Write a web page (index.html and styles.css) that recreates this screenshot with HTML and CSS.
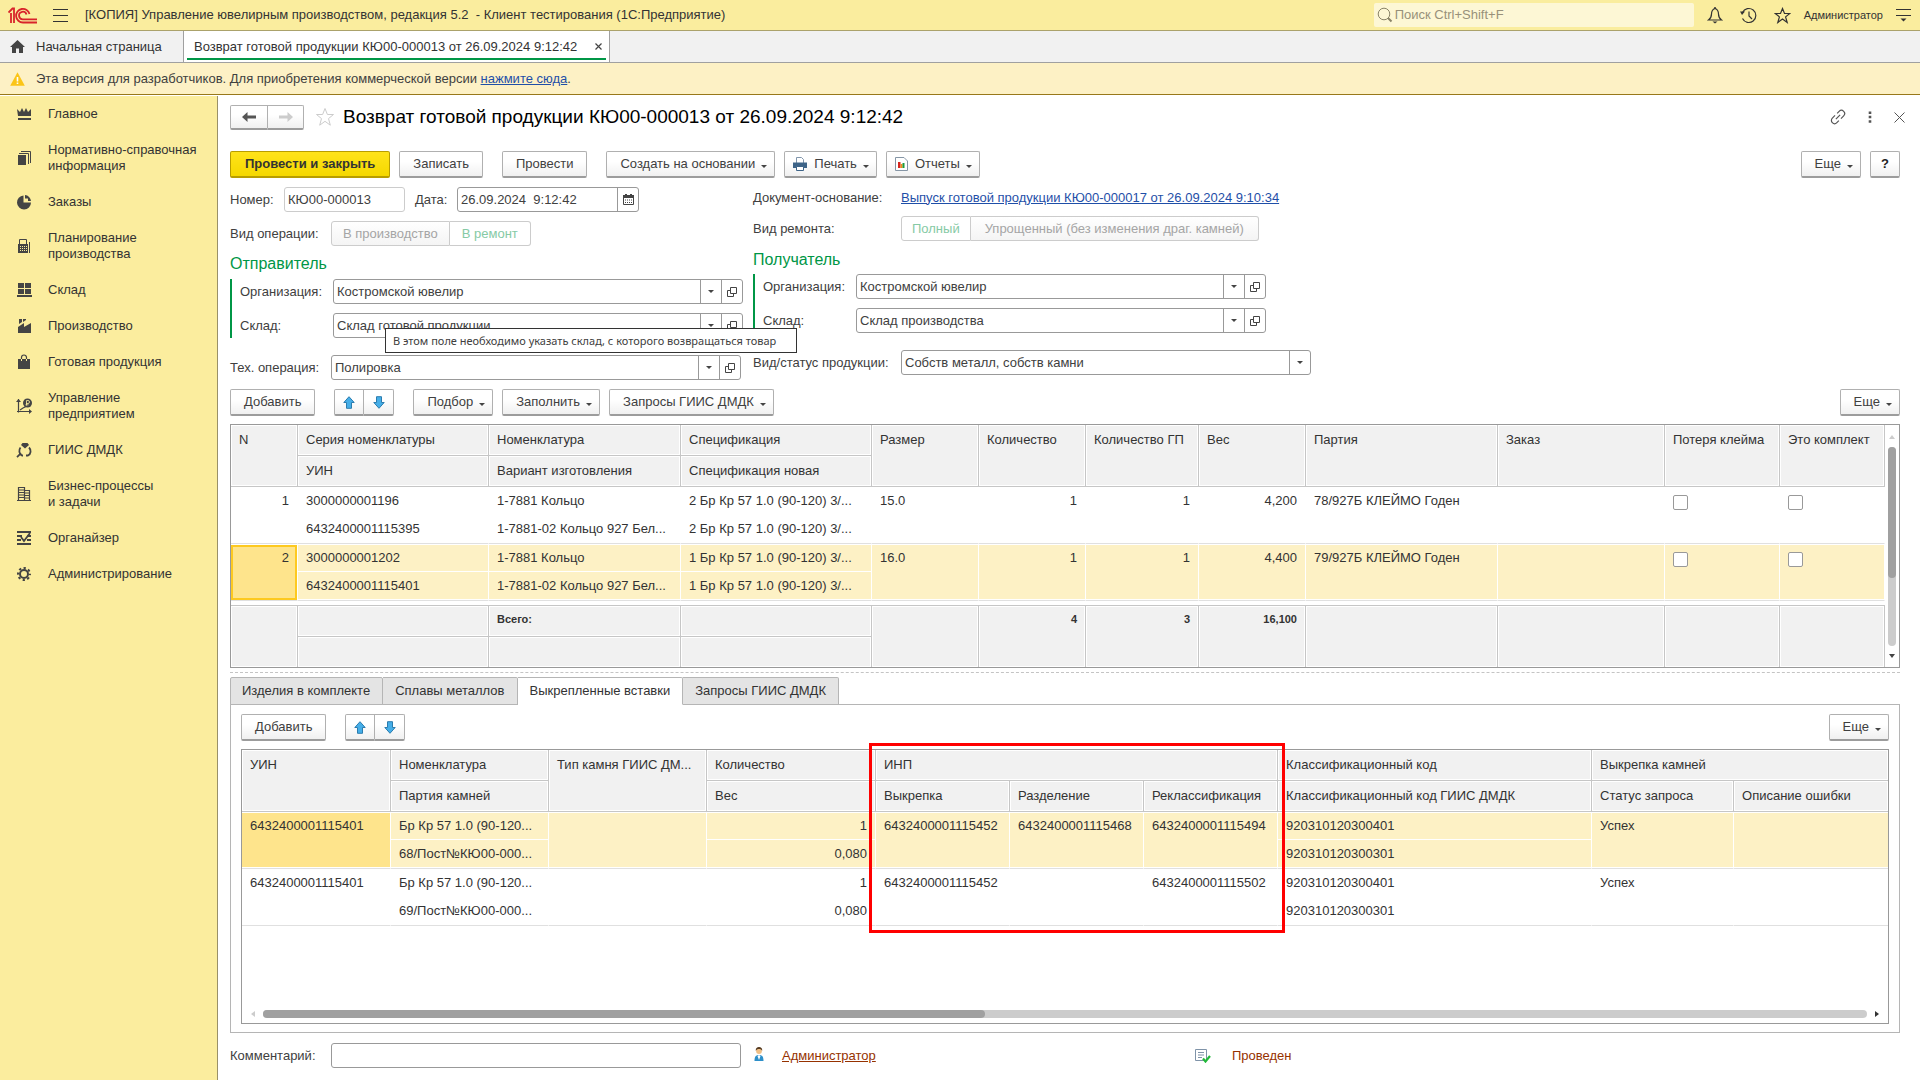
FILE: index.html
```html
<!DOCTYPE html>
<html lang="ru">
<head>
<meta charset="utf-8">
<title>Возврат готовой продукции КЮ00-000013</title>
<link rel="stylesheet" href="styles.css">
</head>
<body>
<svg class="defs" aria-hidden="true">
  <symbol id="i-open" viewBox="0 0 10 10"><path d="M3.500.5h6v6h-6zM3 3.500H.5v6h6V7" fill="none" stroke="#444"/></symbol>
  <symbol id="i-up" viewBox="0 0 12 13"><path d="M6 .7 11.200 6.500H8.500V12.300h-5V6.500H.8z" fill="#45aee8" stroke="#2b7cae" stroke-linejoin="round"/></symbol>
  <symbol id="i-down" viewBox="0 0 12 13"><path d="M6 12.300 11.200 6.500H8.500V.7h-5v5.800H.8z" fill="#45aee8" stroke="#2b7cae" stroke-linejoin="round"/></symbol>
</svg>

<header class="topbar">
  <svg class="logo" viewBox="0 0 30 17" width="30" height="17"><g fill="none" stroke="#d8232a" stroke-width="1.800"><path d="M.5 5.500 4.500 1.500H6V16"/><path d="M3 16V6"/><path d="M21.500 7A6.800 6.800 0 1 0 15 15.500H29"/><path d="M18.500 7.500A3.800 3.800 0 1 0 15 12.300H29"/></g></svg>
  <button class="icon-btn burger" aria-label="Меню"><svg width="15" height="13" viewBox="0 0 15 13"><path d="M0 .5h15M0 6.500h15M0 12.500h15" stroke="#333"/></svg></button>
  <span class="app-title">[КОПИЯ] Управление ювелирным производством, редакция 5.2 &nbsp;- Клиент тестирования (1С:Предприятие)</span>
  <label class="search"><svg width="16" height="16" viewBox="0 0 16 16"><circle cx="7" cy="7" r="5.800" fill="none" stroke="#8a8468"/><path d="m11 11 3.500 3.500" stroke="#8a8468" stroke-width="2"/></svg><input type="text" placeholder="Поиск Ctrl+Shift+F" aria-label="Поиск"></label>
  <button class="icon-btn" aria-label="Уведомления"><svg width="16" height="18" viewBox="0 0 16 18"><path d="M8 2.500C5 3.500 4.500 5.500 4.500 8c0 3-1 4.500-3 6h13c-2-1.500-3-3-3-6 0-2.500-.5-4.500-3.500-5.500z" fill="none" stroke="#333" stroke-width="1.200"/><path d="M8 1v2" stroke="#333" stroke-width="1.500"/><path d="M5.500 15.500h5L8 17.500z" fill="#333"/></svg></button>
  <button class="icon-btn" aria-label="История"><svg width="17" height="17" viewBox="0 0 17 17"><path d="M2.500 5.500a7 7 0 1 1 0 6M9 4.500V9l3 3" fill="none" stroke="#333" stroke-width="1.200"/><path d="M0 4.500h5L2 8z" fill="#333"/></svg></button>
  <button class="icon-btn" aria-label="Избранное"><svg width="17" height="17" viewBox="0 0 17 17"><path d="m8.500 1.500 2 5h5.300l-4.200 3.400 1.600 5.600-4.700-3.400-4.700 3.400 1.600-5.600L1.200 6.500h5.300z" fill="none" stroke="#333" stroke-width="1.200"/></svg></button>
  <span class="user">Администратор</span>
  <button class="icon-btn" aria-label="Настройки"><svg width="15" height="14" viewBox="0 0 15 14"><path d="M0 1.500h15M0 7.500h15" stroke="#333" stroke-width="1.200"/><path d="M4.500 10.500h6l-3 3z" fill="#333"/></svg></button>
</header>

<nav class="tabs">
  <a class="tab home" href="#"><svg width="15" height="13" viewBox="0 0 15 13"><path d="M7.500 0 15 7h-2v6H9V8.500H6V13H2V7H0z" fill="#444"/></svg>Начальная страница</a>
  <a class="tab active" href="#"><span>Возврат готовой продукции КЮ00-000013 от 26.09.2024 9:12:42</span><svg width="7" height="7" viewBox="0 0 7 7"><path d="m.5.5 6 6m0-6-6 6" stroke="#444" stroke-width="1.200"/></svg></a>
</nav>

<div class="notice">
  <svg width="15" height="14" viewBox="0 0 15 14"><path d="M7.500.3 14.800 13.700H.2z" fill="#fbc518"/><path d="M7.500 5v4.500M7.500 10.500v1.500" stroke="#fff" stroke-width="1.600"/></svg>
  <span>Эта версия для разработчиков. Для приобретения коммерческой версии <a href="#">нажмите сюда</a>.</span>
</div>

<div class="body">
  <aside class="sidebar">
    <a href="#"><svg width="16" height="16" viewBox="0 0 16 16"><path d="M1 3l3 3 2-4 2 4 2-4 2 4 3-3v7H2zM2 12h13v2H2z"/></svg>Главное</a>
    <a href="#"><svg width="16" height="16" viewBox="0 0 16 16"><path d="M2 5h8v10H2z"/><path d="M3 3.500h9.500V14M5 1.500h9.500V13" fill="none" stroke="#444"/></svg><span>Нормативно-справочная<br>информация</span></a>
    <a href="#"><svg width="16" height="16" viewBox="0 0 16 16"><path d="M7.500 1.500V8.500H15A7 7 0 1 1 7.500 1.500z"/><path d="M9 1a6.500 6.500 0 0 1 6 6H12V4.500H9z"/></svg>Заказы</a>
    <a href="#"><svg width="16" height="16" viewBox="0 0 16 16"><path d="M2 6h10v9H2z"/><path d="M3.500 6V1.500h7V6M13.500 4V15" fill="none" stroke="#444"/><path d="M4 8.500h7M4 10.500h7M4 12.500h7" stroke="#fbed9e" stroke-dasharray="1 1"/></svg><span>Планирование<br>производства</span></a>
    <a href="#"><svg width="16" height="16" viewBox="0 0 16 16"><path d="M2 1h6v5H2zM9 1h6v5H9zM2 7h6v5H2zM9 7h6v5H9zM1 13h15v2H1z"/></svg>Склад</a>
    <a href="#"><svg width="16" height="16" viewBox="0 0 16 16"><path d="M2 9l6-4v4l7-4v10H2zM3 1h3v3L3 6zM7 1h3v1L7 4z"/></svg>Производство</a>
    <a href="#"><svg width="16" height="16" viewBox="0 0 16 16"><path d="M2 5h12v10H2z"/><path d="M5.500 7V3.500a2.500 2.500 0 0 1 5 0V7" fill="none" stroke="#444" stroke-width="1.200"/><path d="M5.500 5v2M10.500 5v2" stroke="#fbed9e"/></svg>Готовая продукция</a>
    <a href="#"><svg width="16" height="16" viewBox="0 0 16 16"><path d="M2.500 1v13.500M1 13.500h13M4 12l3-2 2-1 2-1" fill="none" stroke="#444" stroke-width="1.200"/><path d="M0 4h5L2.500 1zM13 11v5l3-2.500z"/><circle cx="11.500" cy="5" r="4.500"/><path d="M10.500 7.500v-5h1.500a1.500 1.500 0 0 1 0 3h-2M9.500 6.800h3" fill="none" stroke="#fbed9e" stroke-width=".8"/></svg><span>Управление<br>предприятием</span></a>
    <a href="#"><svg width="16" height="16" viewBox="0 0 16 16"><path d="M5 3l1.500-2h5L13 3 9 6.500zM1 15l3.500-4"/><path d="M4.500 5.500C2.500 8 3 12 6 13.500h1M13 5.500c2.500 2.500 2 6.500-1 8h-2M1 15.200l4-4" fill="none" stroke="#444" stroke-width="1.800"/></svg>ГИИС ДМДК</a>
    <a href="#"><svg width="16" height="16" viewBox="0 0 16 16"><path d="M2.500 14.500v-13h6v13M8.500 4.500h5v10M1 14.500h14M2 4h6M2 6.500h6M2 9h6M2 11.500h6M9 7h5M9 9.500h5M9 12h5" fill="none" stroke="#444" stroke-width="1.200"/></svg><span>Бизнес-процессы<br>и задачи</span></a>
    <a href="#"><svg width="16" height="16" viewBox="0 0 16 16"><path d="M1 2h14M1 6h5M11 6h4M1 10h4M11 10h4M1 14h14" stroke="#444" stroke-width="1.800"/><path d="M5 7l3 4 6-8" stroke="#444" stroke-width="1.800" fill="none"/></svg>Органайзер</a>
    <a href="#"><svg width="16" height="16" viewBox="0 0 16 16"><circle cx="8" cy="8" r="4" fill="none" stroke="#444" stroke-width="2"/><circle cx="8" cy="8" r="6" fill="none" stroke="#444" stroke-width="2" stroke-dasharray="2.300 2.410" stroke-dashoffset="1.150"/></svg>Администрирование</a>
  </aside>

  <main class="main">
    <div class="title-row">
      <div class="pair nav">
        <button aria-label="Назад"><svg width="14" height="10" viewBox="0 0 14 10"><path d="M0 5l5.500-5v3.500H14v3H5.500V10z" fill="#555"/></svg></button><button aria-label="Вперед" disabled><svg width="14" height="10" viewBox="0 0 14 10"><path d="M14 5L8.500 0v3.500H0v3h8.500V10z" fill="#ccc"/></svg></button>
      </div>
      <svg class="star" width="20" height="20" viewBox="0 0 20 20"><path d="m10 1.500 2.400 6h6.100l-5 4.100 1.800 6.600L10 14.300l-5.300 3.900 1.800-6.600-5-4.100h6.100z" fill="none" stroke="#ccc"/></svg>
      <h1>Возврат готовой продукции КЮ00-000013 от 26.09.2024 9:12:42</h1>
      <div class="win-tools">
        <button class="icon-btn" aria-label="Ссылка"><svg width="16" height="16" viewBox="0 0 16 16"><g transform="rotate(-45 8 8)" fill="none" stroke="#555" stroke-width="1.200"><path d="M7 4.800H3.200a3.200 3.200 0 0 0 0 6.400H6M9 11.200h3.800a3.200 3.200 0 0 0 0-6.400H10M5 8h6"/></g></svg></button>
        <button class="icon-btn" aria-label="Действия"><svg width="4" height="12" viewBox="0 0 4 12"><path d="M.7.500h2.600v2.500H.7zM.7 4.800h2.600v2.500H.7zM.7 9.200h2.600v2.500H.7z" fill="#555"/></svg></button>
        <button class="icon-btn" aria-label="Закрыть"><svg width="11" height="11" viewBox="0 0 11 11"><path d="m.5.500 10 10m0-10-10 10" stroke="#555"/></svg></button>
      </div>
    </div>

    <div class="toolbar commands">
      <button class="btn primary">Провести и закрыть</button>
      <button class="btn">Записать</button>
      <button class="btn wide-gap">Провести</button>
      <button class="btn menu wide-gap">Создать на основании</button>
      <button class="btn menu pic"><svg width="14" height="14" viewBox="0 0 14 14"><path d="M3.500 6V.5h5l2 2V6" fill="#fff" stroke="#8095ab"/><path d="M0 5.500h14V11H0z" fill="#3e6488"/><path d="M3.500 9.500h7v4h-7z" fill="#fff" stroke="#3e6488"/></svg>Печать</button>
      <button class="btn menu pic"><svg width="13" height="14" viewBox="0 0 13 14"><path d="M.5.500h8.500l3.500 3.500v9.500H.5z" fill="#fff" stroke="#8595a5"/><path d="M3 5h2.500v6H3z" fill="#d6261f"/><path d="M5.500 7h2v4h-2z" fill="#f08a1a"/><path d="M7.500 6h2v5h-2z" fill="#1c9c3c"/></svg>Отчеты</button>
      <button class="btn menu push">Еще</button>
      <button class="btn help">?</button>
    </div>

    <div class="form">
      <section class="col left">
        <div class="row">
          <label class="number-label" for="num">Номер:</label>
          <div class="field muted number"><input id="num" value="КЮ00-000013"></div>
          <label class="date-label" for="date">Дата:</label>
          <div class="field date"><input id="date" value="26.09.2024  9:12:42"><button aria-label="Календарь"><svg width="11" height="11" viewBox="0 0 11 11"><path d="M.5 1.500h10v9H.5z" fill="none" stroke="#444"/><path d="M0 1h11v3H0zM2 0h2v2H2zM7 0h2v2H7z" fill="#444"/><path d="M2 6h7M2 8.500h7" stroke="#444" stroke-dasharray="1 1"/></svg></button></div>
        </div>
        <div class="row kind">
          <span class="label">Вид операции:</span>
          <div class="segments"><button disabled>В производство</button><button class="on" disabled>В ремонт</button></div>
        </div>
        <h2>Отправитель</h2>
        <div class="group">
          <div class="row"><label class="label" for="org1">Организация:</label>
            <div class="field combo"><input id="org1" value="Костромской ювелир"><button class="drop" aria-label="Выбрать"></button><button aria-label="Открыть"><svg width="10" height="10"><use href="#i-open"/></svg></button></div></div>
          <div class="row"><label class="label" for="wh1">Склад:</label>
            <div class="field combo"><input id="wh1" value="Склад готовой продукции"><button class="drop" aria-label="Выбрать"></button><button aria-label="Открыть"><svg width="10" height="10"><use href="#i-open"/></svg></button>
              <div class="tooltip" role="tooltip">В этом поле необходимо указать склад, с которого возвращаться товар</div></div></div>
        </div>
        <div class="row"><label class="label" for="tech">Тех. операция:</label>
          <div class="field combo"><input id="tech" value="Полировка"><button class="drop" aria-label="Выбрать"></button><button aria-label="Открыть"><svg width="10" height="10"><use href="#i-open"/></svg></button></div></div>
      </section>

      <section class="col right">
        <div class="row"><span class="label">Документ-основание:</span><a class="doc-link" href="#">Выпуск готовой продукции КЮ00-000017 от 26.09.2024 9:10:34</a></div>
        <div class="row kind"><span class="label">Вид ремонта:</span>
          <div class="segments"><button class="on" disabled>Полный</button><button disabled>Упрощенный (без изменения драг. камней)</button></div></div>
        <h2>Получатель</h2>
        <div class="group">
          <div class="row"><label class="label" for="org2">Организация:</label>
            <div class="field combo"><input id="org2" value="Костромской ювелир"><button class="drop" aria-label="Выбрать"></button><button aria-label="Открыть"><svg width="10" height="10"><use href="#i-open"/></svg></button></div></div>
          <div class="row"><label class="label" for="wh2">Склад:</label>
            <div class="field combo"><input id="wh2" value="Склад производства"><button class="drop" aria-label="Выбрать"></button><button aria-label="Открыть"><svg width="10" height="10"><use href="#i-open"/></svg></button></div></div>
        </div>
        <div class="row"><label class="label" for="stat">Вид/статус продукции:</label>
          <div class="field combo"><input id="stat" value="Собств металл, собств камни"><button class="drop" aria-label="Выбрать"></button></div></div>
      </section>
    </div>

    <div class="toolbar">
      <button class="btn">Добавить</button>
      <div class="pair wide-gap"><button aria-label="Вверх"><svg width="12" height="13"><use href="#i-up"/></svg></button><button aria-label="Вниз"><svg width="12" height="13"><use href="#i-down"/></svg></button></div>
      <button class="btn menu wide-gap">Подбор</button>
      <button class="btn menu">Заполнить</button>
      <button class="btn menu">Запросы ГИИС ДМДК</button>
      <button class="btn menu push">Еще</button>
    </div>

    <div class="grid-box items">
      <table>
        <colgroup><col class="w67"><col class="w191"><col class="w192"><col class="w191"><col class="w107"><col class="w107"><col class="w113"><col class="w107"><col class="w192"><col><col class="w115"><col class="w105"></colgroup>
        <thead>
          <tr><th rowspan="2">N</th><th>Серия номенклатуры</th><th>Номенклатура</th><th>Спецификация</th><th rowspan="2">Размер</th><th rowspan="2">Количество</th><th rowspan="2">Количество ГП</th><th rowspan="2">Вес</th><th rowspan="2">Партия</th><th rowspan="2">Заказ</th><th rowspan="2">Потеря клейма</th><th rowspan="2">Это комплект</th></tr>
          <tr><th>УИН</th><th>Вариант изготовления</th><th>Спецификация новая</th></tr>
        </thead>
        <tbody>
          <tr class="a"><td rowspan="2" class="num">1</td><td>3000000001196</td><td>1-7881 Кольцо</td><td>2 Бр Кр 57 1.0 (90-120) 3/...</td><td rowspan="2">15.0</td><td rowspan="2" class="num">1</td><td rowspan="2" class="num">1</td><td rowspan="2" class="num">4,200</td><td rowspan="2">78/927Б КЛЕЙМО Годен</td><td rowspan="2"></td><td rowspan="2"><input type="checkbox" aria-label="Потеря клейма"></td><td rowspan="2"><input type="checkbox" aria-label="Это комплект"></td></tr>
          <tr class="b"><td>6432400001115395</td><td>1-7881-02 Кольцо 927 Бел...</td><td>2 Бр Кр 57 1.0 (90-120) 3/...</td></tr>
          <tr class="a sel"><td rowspan="2" class="num current framed">2</td><td>3000000001202</td><td>1-7881 Кольцо</td><td>1 Бр Кр 57 1.0 (90-120) 3/...</td><td rowspan="2">16.0</td><td rowspan="2" class="num">1</td><td rowspan="2" class="num">1</td><td rowspan="2" class="num">4,400</td><td rowspan="2">79/927Б КЛЕЙМО Годен</td><td rowspan="2"></td><td rowspan="2"><input type="checkbox" aria-label="Потеря клейма"></td><td rowspan="2"><input type="checkbox" aria-label="Это комплект"></td></tr>
          <tr class="b sel"><td>6432400001115401</td><td>1-7881-02 Кольцо 927 Бел...</td><td>1 Бр Кр 57 1.0 (90-120) 3/...</td></tr>
        </tbody>
        <tfoot>
          <tr class="gap"><td colspan="12"></td></tr>
          <tr><td rowspan="2"></td><td></td><td>Всего:</td><td></td><td rowspan="2"></td><td rowspan="2" class="num">4</td><td rowspan="2" class="num">3</td><td rowspan="2" class="num">16,100</td><td rowspan="2"></td><td rowspan="2"></td><td rowspan="2"></td><td rowspan="2"></td></tr>
          <tr class="last"><td></td><td></td><td></td></tr>
        </tfoot>
      </table>
      <div class="vscroll"><svg width="6" height="4" viewBox="0 0 6 4"><path d="M3 0l3 4H0z" fill="#ccc"/></svg><div class="track"><div class="thumb"></div></div><svg width="6" height="4" viewBox="0 0 6 4"><path d="M0 0h6L3 4z" fill="#444"/></svg></div>
    </div>

    <div class="splitter"></div>

    <div class="page-tabs" role="tablist">
      <button role="tab">Изделия в комплекте</button><button role="tab">Сплавы металлов</button><button role="tab" class="on" aria-selected="true">Выкрепленные вставки</button><button role="tab">Запросы ГИИС ДМДК</button>
    </div>
    <section class="panel">
      <div class="toolbar">
        <button class="btn">Добавить</button>
        <div class="pair wide-gap"><button aria-label="Вверх"><svg width="12" height="13"><use href="#i-up"/></svg></button><button aria-label="Вниз"><svg width="12" height="13"><use href="#i-down"/></svg></button></div>
        <button class="btn menu push">Еще</button>
      </div>
      <div class="grid-box inserts">
        <table>
          <colgroup><col class="w149"><col class="w158"><col class="w158"><col class="w169"><col class="w134"><col class="w134"><col class="w134"><col class="w314"><col class="w142"><col></colgroup>
          <thead>
            <tr><th rowspan="2">УИН</th><th>Номенклатура</th><th rowspan="2">Тип камня ГИИС ДМ...</th><th>Количество</th><th colspan="3">ИНП</th><th>Классификационный код</th><th colspan="2">Выкрепка камней</th></tr>
            <tr><th>Партия камней</th><th>Вес</th><th>Выкрепка</th><th>Разделение</th><th>Реклассификация</th><th>Классификационный код ГИИС ДМДК</th><th>Статус запроса</th><th>Описание ошибки</th></tr>
          </thead>
          <tbody>
            <tr class="a sel"><td rowspan="2" class="current">6432400001115401</td><td>Бр Кр 57 1.0 (90-120...</td><td rowspan="2"></td><td class="num">1</td><td rowspan="2">6432400001115452</td><td rowspan="2">6432400001115468</td><td rowspan="2">6432400001115494</td><td>920310120300401</td><td rowspan="2">Успех</td><td rowspan="2"></td></tr>
            <tr class="b sel"><td>68/Пост№КЮ00-000...</td><td class="num">0,080</td><td>920310120300301</td></tr>
            <tr class="a"><td rowspan="2">6432400001115401</td><td>Бр Кр 57 1.0 (90-120...</td><td rowspan="2"></td><td class="num">1</td><td rowspan="2">6432400001115452</td><td rowspan="2"></td><td rowspan="2">6432400001115502</td><td>920310120300401</td><td rowspan="2">Успех</td><td rowspan="2"></td></tr>
            <tr class="b"><td>69/Пост№КЮ00-000...</td><td class="num">0,080</td><td>920310120300301</td></tr>
          </tbody>
        </table>
        <div class="hscroll"><svg width="4" height="6" viewBox="0 0 4 6"><path d="M4 0v6L0 3z" fill="#ccc"/></svg><div class="track"><div class="thumb"></div></div><svg width="4" height="6" viewBox="0 0 4 6"><path d="M0 0v6l4-3z" fill="#333"/></svg></div>
        <div class="highlight"></div>
      </div>
    </section>

    <footer class="status">
      <label class="label" for="comment">Комментарий:</label>
      <div class="field comment"><input id="comment"></div>
      <svg class="person" width="10" height="14" viewBox="0 0 10 14"><path d="M.5 14c0-4 1-6 4.500-6s4.500 2 4.500 6z" fill="#2d8fc9"/><path d="M5 8l1.500 1L5 13 3.500 9z" fill="#fff"/><circle cx="5" cy="4" r="2.900" fill="#f0bf85"/><path d="M1.800 4C1.500 1 3 0 5 0s3.500 1 3.200 4C7.500 2.500 6.500 2 5 2S2.500 2.500 1.800 4z" fill="#553a20"/></svg>
      <a class="author" href="#">Администратор</a>
      <div class="posted"><svg width="16" height="14" viewBox="0 0 16 14"><path d="M.5.500h11v11H.5z" fill="#fff" stroke="#7f93a8"/><path d="M3 3.500h6M3 6h6M3 8.500h4" stroke="#7f93a8"/><path d="M8 9.500l2.500 3L15 7" fill="none" stroke="#22b83a" stroke-width="2.200"/></svg><span>Проведен</span></div>
    </footer>
  </main>
</div>
</body>
</html>
```
FILE: styles.css
```css
* { box-sizing: border-box; }
body {
  margin: 0;
  min-height: 100vh;
  display: flex;
  flex-direction: column;
  font: 13px/16px "Liberation Sans", Arial, sans-serif;
  color: #404040;
  background: #fff;
}
button, input { font: inherit; color: inherit; margin: 0; padding: 0; }
button { background: none; border: 0; white-space: nowrap; }
svg { flex: none; display: block; }
a { color: #1f4fa8; }
.defs { position: absolute; width: 0; height: 0; }
.icon-btn { display: flex; align-items: center; justify-content: center; }

/* Application header */
.topbar {
  height: 31px;
  display: flex;
  align-items: center;
  padding: 0 8px;
  background: #faed9e;
  border-bottom: 1px solid #aba26b;
  color: #333;
}
.burger { margin: 0 17px 0 15px; }
.app-title { flex: 1; white-space: nowrap; }
.search {
  width: 320px;
  height: 24px;
  margin: 0 12px 0 0;
  padding-left: 3px;
  display: flex;
  align-items: center;
  gap: 2px;
  background: #fdf7d5;
  border-radius: 2px;
}
.search input { flex: 1; min-width: 0; border: 0; background: none; outline: 0; }
.search input::placeholder { color: #98917a; opacity: 1; }
.topbar .search ~ .icon-btn { width: 18px; margin-right: 16px; }
.topbar .user { font-size: 11px; margin: 0 11px 0 -4px; }
.topbar .user + .icon-btn { margin-right: 0; width: 18px; }

.tabs { height: 32px; display: flex; background: #f1f1f1; border-bottom: 1px solid #a0a0a0; }
.tab { display: flex; align-items: center; color: #333; text-decoration: none; border-right: 1px solid #a0a0a0; }
.home { width: 184px; padding-left: 10px; gap: 11px; }
.active { position: relative; padding: 0 7px 0 10px; gap: 18px; background: #fff; }
.active::after { content: ""; position: absolute; left: 3px; right: 3px; bottom: 2px; height: 2px; background: #009646; }

.notice {
  height: 32px;
  display: flex;
  align-items: center;
  gap: 11px;
  padding-left: 10px;
  background: #fdf1c5;
  border-bottom: 1px solid #98781a;
}

.body { flex: 1; display: flex; padding-top: 1px; }

/* Sections panel */
.sidebar { width: 218px; flex: none; background: #fbed9e; border-right: 1px solid #999068; }
.sidebar a {
  display: flex;
  align-items: center;
  gap: 16px;
  padding: 10px 0 10px 16px;
  color: #333;
  text-decoration: none;
}
.sidebar svg { fill: #444; }

.main { flex: 1; min-width: 0; display: flex; flex-direction: column; padding: 9px 20px 12px 12px; }

.title-row { height: 24px; display: flex; align-items: center; }
.star { margin: 0 8px 0 11px; }
h1 { margin: 0; font: 19px/24px "Liberation Sans", Arial, sans-serif; color: #000; white-space: nowrap; }
.win-tools { margin: 0 -5px 0 auto; display: flex; align-items: center; gap: 22px; }

/* Buttons */
.toolbar { display: flex; gap: 9px; height: 27px; }
.commands { margin-top: 22px; }
.btn, .pair button {
  height: 27px;
  border: 1px solid #b0b0b0;
  border-bottom: 2px solid #9c9c9c;
  border-radius: 2px;
  background: linear-gradient(#fff 40%, #f0f0f0);
}
.btn { padding: 0 13px; display: flex; align-items: center; }
.primary { padding: 0 14px; background: linear-gradient(#ffe31a, #f5d800); border-color: #b89d00; font-weight: bold; color: #333; }
.wide-gap { margin-left: 10px; }
.menu { padding-right: 7px; }
.menu::after, .drop::after {
  content: "";
  border: 3px solid transparent;
  border-top-color: #444;
  border-bottom: 0;
}
.menu::after { margin: 4px 0 0 6px; }
.pic { padding-left: 8px; }
.pic svg { margin-right: 7px; }
.push { margin-left: auto; }
.help { width: 30px; padding: 0; justify-content: center; font-weight: bold; color: #222; }
.pair { display: flex; }
.pair button { width: 30px; display: flex; align-items: center; justify-content: center; border-radius: 2px 0 0 2px; }
.pair button + button { border-left: 0; border-radius: 0 2px 2px 0; }
.nav button { width: 38px; height: 25px; }
.nav button + button { width: 36px; }

/* Form fields */
.form { display: flex; margin: 7px 0 9px; }
.col { display: flex; flex-direction: column; }
.left { width: 523px; padding-top: 2px; }
.row { display: flex; align-items: center; height: 25px; }
.label { flex: none; white-space: nowrap; }
.left .label, .status .label { width: 101px; }
.right .label { width: 148px; }
.col .group .label { width: 93px; }
.number-label { width: 54px; }
.date-label { width: 42px; margin-left: 10px; }
.field {
  display: flex;
  position: relative;
  height: 25px;
  border: 1px solid #999;
  border-radius: 3px;
  background: #fff;
}
.field input { flex: 1; min-width: 0; border: 0; outline: 0; background: none; padding: 0 3px; white-space: pre; }
.field button { width: 21px; border-left: 1px solid #999; display: flex; align-items: center; justify-content: center; }
.muted { border-color: #ccc; }
.number { width: 121px; }
.date { width: 182px; }
.combo, .comment { width: 410px; }
.kind { margin-top: 9px; }
.right .kind { margin-top: 6px; }
.segments { display: flex; height: 25px; }
.segments button { padding: 0 11px; border: 1px solid #ccc; border-radius: 3px 0 0 3px; background: linear-gradient(#fff, #f4f4f4); color: #a5a5a5; }
.segments button + button { padding: 0 12px; border-left: 0; border-radius: 0 3px 3px 0; }
.segments .on { background: #fff; color: #86caa5; }
.right .segments button { padding: 0 14px; }
.right .segments button:first-child { padding: 0 10px; }
h2 { margin: 8px 0 5px; font: 16px/20px "Liberation Sans", Arial, sans-serif; color: #009646; }
.right h2 { margin: 9px 0 4px; }
.group { display: flex; flex-direction: column; gap: 9px; border-left: 2px solid #009646; padding-left: 8px; margin-bottom: 17px; }
.tooltip {
  position: absolute;
  z-index: 2;
  left: 51px;
  top: 14px;
  min-width: 412px;
  height: 25px;
  padding: 0 7px;
  font: 11px/23px "Noto Sans", "Open Sans", sans-serif;
  white-space: nowrap;
  background: #fff;
  border: 1px solid #333;
}

/* Data grids */
.grid-box { position: relative; display: flex; margin-top: 8px; border: 1px solid #999; }
table { flex: 1; width: 100%; table-layout: fixed; border-collapse: separate; border-spacing: 0; color: #333; }
th, td { padding: 0 8px; text-align: left; vertical-align: top; font-weight: normal; white-space: nowrap; overflow: hidden; }
th, tfoot td {
  height: 31px;
  line-height: 29px;
  background: #f1f1f1;
  border-right: 1px solid #c6c6c6;
  border-bottom: 1px solid #c6c6c6;
  box-shadow: inset 0 0 0 1px #fff;
}
tbody td { padding-top: 1px; line-height: 26px; border-right: 1px solid #fff; border-bottom: 1px solid #fff; }
.a td { height: 28px; }
.b td { height: 29px; border-bottom-color: #e0e0e0; }
.a td[rowspan] { border-bottom-color: #e0e0e0; }
.sel td { background: #fdf1c5; }
.b.sel td, .a.sel td[rowspan] { box-shadow: inset 0 -1px #fff; }
.a.sel td { border-top: 1px solid #fff; padding-top: 0; }
.sel td.current { background: #fee48c; }
.a.sel td.framed[rowspan] { box-shadow: inset 0 0 0 2px #fdc920; }
.num { text-align: right; }
tfoot td { font-size: 11px; font-weight: bold; line-height: 27px; }
tfoot .gap td { height: 5px; background: #fff; border-right: 0; line-height: 0; }
tfoot .last td { height: 30px; border-bottom: 0; }
tfoot td[rowspan] { border-bottom: 0; }
td input[type="checkbox"] {
  appearance: none;
  display: block;
  width: 15px;
  height: 15px;
  margin-top: 7px;
  border: 1px solid #999;
  border-radius: 2px;
  background: #fff;
}
.w67 { width: 67px; } .w105 { width: 105px; } .w107 { width: 107px; } .w113 { width: 113px; }
.w115 { width: 115px; } .w134 { width: 134px; } .w142 { width: 142px; } .w149 { width: 149px; }
.w158 { width: 158px; } .w169 { width: 169px; } .w191 { width: 191px; } .w192 { width: 192px; }
.w314 { width: 314px; }

.vscroll { width: 14px; flex: none; display: flex; flex-direction: column; align-items: center; gap: 8px; padding: 10px 0 9px; }
.track { flex: 1; background: #ccc; border-radius: 4px; }
.thumb { background: #a0a0a0; border-radius: 4px; }
.vscroll .track { width: 8px; }
.vscroll .thumb { height: 66%; }
.hscroll { display: flex; align-items: center; gap: 8px; padding: 0 9px 5px; }
.hscroll .track, .hscroll .thumb { height: 8px; }
.hscroll .thumb { width: 45%; }

.splitter { margin-top: 4px; border-top: 1px dashed #c4c4c4; }
.page-tabs { display: flex; margin: 4px 0 -1px; position: relative; }
.page-tabs button { height: 28px; padding: 0 12px; border: 1px solid #b5b5b5; border-left-width: 0; background: #e4e4e4; color: #333; border-radius: 0 2px 0 0; }
.page-tabs button:first-child { padding-left: 11px; border-left-width: 1px; border-radius: 2px 2px 0 0; }
.page-tabs .on { background: #fff; border-bottom-color: #fff; }
.panel { flex: 1; display: flex; flex-direction: column; border: 1px solid #b5b5b5; padding: 9px 10px 8px; }
.inserts { flex: 1; flex-direction: column; justify-content: space-between; }
.inserts table { flex: none; }
.inserts th:last-child, .inserts .a td:last-child { border-right: 0; }
.highlight { position: absolute; left: 627px; top: -7px; width: 416px; height: 190px; border: 3px solid #f00; }

.status { display: flex; align-items: center; margin-top: 10px; color: #404040; }
.person { margin: 0 18px 4px 13px; }
.author { width: 413px; color: #963200; }
.posted { display: flex; align-items: center; gap: 21px; color: #963200; }
```
